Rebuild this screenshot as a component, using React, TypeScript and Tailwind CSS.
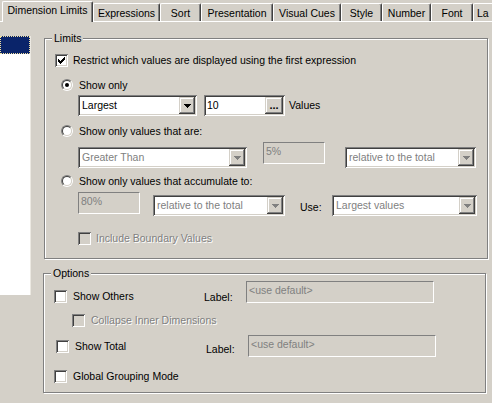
import React from "react";

const sunken =
  "shadow-[inset_1px_1px_0_#808080,inset_-1px_-1px_0_#ffffff,inset_2px_2px_0_#404040,inset_-2px_-2px_0_#d4d0c8]";
const raised =
  "shadow-[inset_-1px_-1px_0_#404040,inset_1px_1px_0_#d4d0c8,inset_-2px_-2px_0_#808080,inset_2px_2px_0_#ffffff]";
const etched = "border border-[#808080] shadow-[inset_1px_1px_0_#ffffff,1px_1px_0_#ffffff]";
const greyText = "text-[#808080] [text-shadow:1px_1px_0_#ffffff]";

const Arrow = ({ disabled }: { disabled?: boolean }) => (
  <svg width="7" height="4" viewBox="0 0 7 4" shapeRendering="crispEdges">
    <path d="M0 0h7v1H0z M1 1h5v1H1z M2 2h3v1H2z M3 3h1v1H3z" fill={disabled ? "#808080" : "#000000"} />
  </svg>
);

const Combo = ({ w, text, disabled }: { w: string; text: string; disabled?: boolean }) => (
  <div className={`flex h-[21px] shrink-0 bg-white p-[2px] ${w} ${sunken}`}>
    <span className={`flex-1 truncate pl-[2px] leading-[17px] ${disabled ? "text-[#808080]" : "text-black"}`}>
      {text}
    </span>
    <div className={`flex h-[17px] w-[16px] items-center justify-center bg-[#d4d0c8] ${raised}`}>
      <Arrow disabled={disabled} />
    </div>
  </div>
);

const Field = ({ w, h, text }: { w: string; h: string; text: string }) => (
  <div
    className={`shrink-0 border border-t-[#808080] border-l-[#808080] border-r-white border-b-white pl-[2px] leading-[17px] text-[#808080] ${w} ${h}`}
  >
    {text}
  </div>
);

const Check = ({ checked, disabled }: { checked?: boolean; disabled?: boolean }) => (
  <div
    className={`flex h-[13px] w-[13px] shrink-0 items-center justify-center ${sunken} ${disabled ? "bg-[#d4d0c8]" : "bg-white"}`}
  >
    {checked && (
      <svg width="7" height="7" viewBox="0 0 7 7" shapeRendering="crispEdges">
        <path
          d="M6 0h1v1H6z M5 1h2v1H5z M0 2h1v1H0z M4 2h3v1H4z M0 3h2v1H0z M3 3h3v1H3z M0 4h5v1H0z M1 5h3v1H1z M2 6h1v1H2z"
          fill="#000000"
        />
      </svg>
    )}
  </div>
);

const Radio = ({ checked }: { checked?: boolean }) => (
  <div className="h-[12px] w-[12px] shrink-0 rounded-full border border-t-[#808080] border-l-[#808080] border-r-white border-b-white">
    <div className="flex h-full w-full items-center justify-center rounded-full border border-t-[#404040] border-l-[#404040] border-r-[#d4d0c8] border-b-[#d4d0c8] bg-white">
      {checked && <div className="h-[4px] w-[4px] rounded-full bg-black" />}
    </div>
  </div>
);

const tabs = [
  { label: "Expressions", w: "w-[67px]" },
  { label: "Sort", w: "w-[41px]" },
  { label: "Presentation", w: "w-[72px]" },
  { label: "Visual Cues", w: "w-[68px]" },
  { label: "Style", w: "w-[41px]" },
  { label: "Number", w: "w-[49px]" },
  { label: "Font", w: "w-[42px]" },
];

export default function App() {
  return (
    <div className="h-[403px] w-[492px] overflow-hidden bg-[#d4d0c8] font-['Liberation_Sans',Arial,sans-serif] text-[10.5px] leading-[13px] text-black">
      {/* tab strip */}
      <div className="flex h-[22px] items-start border-b border-white">
        <div className="ml-[2px] mt-[1px] h-[21px] w-[91px] shrink-0 rounded-t-[2px] border-l border-t border-white border-r border-r-[#404040] bg-[#d4d0c8] pt-[2px] text-center shadow-[inset_-1px_0_0_#808080]">
          Dimension Limits
        </div>
        {tabs.map((t) => (
          <div
            key={t.label}
            className={`mt-[3px] h-[18px] shrink-0 rounded-t-[2px] border-l border-t border-white border-r border-r-[#404040] pt-[3px] text-center shadow-[inset_-1px_0_0_#808080] ${t.w}`}
          >
            {t.label}
          </div>
        ))}
        <div className="mt-[3px] h-[18px] min-w-0 flex-1 rounded-tl-[2px] border-l border-t border-white pl-[3px] pt-[3px]">
          La
        </div>
      </div>

      <div className="flex items-start">
        {/* list on the left */}
        <div className="mt-[14px] h-[259px] w-[31px] shrink-0 border-r border-[#ece9e2] bg-white">
          <div className="h-[18px] border border-dotted border-[#f0e0a0] bg-[#0a246a]" />
        </div>

        <div className="flex flex-col">
          {/* Limits */}
          <div className={`relative ml-[13px] mt-[16px] h-[221px] w-[444px] ${etched}`}>
            <span className="absolute -top-[7px] left-[7px] bg-[#d4d0c8] px-[2px]">Limits</span>

            <div className="ml-[10px] mt-[15px] flex h-[13px] items-center gap-[5px]">
              <Check checked />
              <span>Restrict which values are displayed using the first expression</span>
            </div>

            <div className="ml-[16px] mt-[12px] flex h-[12px] items-center gap-[6px]">
              <Radio checked />
              <span>Show only</span>
            </div>

            <div className="ml-[33px] mt-[4px] flex items-center">
              <Combo w="w-[119px]" text="Largest" />
              <div className={`ml-[7px] flex h-[21px] w-[81px] bg-white p-[2px] ${sunken}`}>
                <span className="flex-1 pl-[1px] leading-[17px]">10</span>
                <div className={`flex h-[17px] w-[18px] items-end justify-center bg-[#d4d0c8] pb-[3px] text-[11px] font-bold leading-none ${raised}`}>
                  ...
                </div>
              </div>
              <span className="ml-[4px]">Values</span>
            </div>

            <div className="ml-[16px] mt-[9px] flex h-[12px] items-center gap-[6px]">
              <Radio />
              <span>Show only values that are:</span>
            </div>

            <div className="ml-[33px] mt-[5px] flex items-start">
              <div className="mt-[5px]">
                <Combo w="w-[169px]" text="Greater Than" disabled />
              </div>
              <div className="ml-[16px]">
                <Field w="w-[62px]" h="h-[22px]" text="5%" />
              </div>
              <div className="ml-[20px] mt-[5px]">
                <Combo w="w-[131px]" text="relative to the total" disabled />
              </div>
            </div>

            <div className="ml-[16px] mt-[7px] flex h-[12px] items-center gap-[6px]">
              <Radio />
              <span>Show only values that accumulate to:</span>
            </div>

            <div className="ml-[33px] mt-[5px] flex items-start">
              <Field w="w-[62px]" h="h-[22px]" text="80%" />
              <div className="ml-[13px] mt-[3px]">
                <Combo w="w-[132px]" text="relative to the total" disabled />
              </div>
              <span className="ml-[15px] mt-[9px] w-[17px]">Use:</span>
              <div className="ml-[15px] mt-[3px]">
                <Combo w="w-[145px]" text="Largest values" disabled />
              </div>
            </div>

            <div className="ml-[33px] mt-[16px] flex h-[13px] items-center gap-[5px]">
              <Check disabled />
              <span className={greyText}>Include Boundary Values</span>
            </div>
          </div>

          {/* Options */}
          <div className={`relative ml-[12px] mt-[14px] h-[120px] w-[443px] ${etched}`}>
            <span className="absolute -top-[7px] left-[7px] bg-[#d4d0c8] px-[2px]">Options</span>

            <div className="mt-[7px] flex items-start">
              <div className="ml-[10px] mt-[9px] flex h-[13px] w-[150px] items-center gap-[6px]">
                <Check />
                <span>Show Others</span>
              </div>
              <span className="mt-[10px] w-[42px]">Label:</span>
              <Field w="w-[188px]" h="h-[22px]" text="<use default>" />
            </div>

            <div className="ml-[28px] mt-[10px] flex h-[13px] items-center gap-[6px]">
              <Check disabled />
              <span className={greyText}>Collapse Inner Dimensions</span>
            </div>

            <div className="mt-[8px] flex items-start">
              <div className="ml-[12px] mt-[5px] flex h-[13px] w-[150px] items-center gap-[6px]">
                <Check />
                <span>Show Total</span>
              </div>
              <span className="mt-[8px] w-[42px]">Label:</span>
              <Field w="w-[188px]" h="h-[22px]" text="<use default>" />
            </div>

            <div className="ml-[10px] mt-[13px] flex h-[13px] items-center gap-[6px]">
              <Check />
              <span>Global Grouping Mode</span>
            </div>
          </div>
        </div>
      </div>
    </div>
  );
}
